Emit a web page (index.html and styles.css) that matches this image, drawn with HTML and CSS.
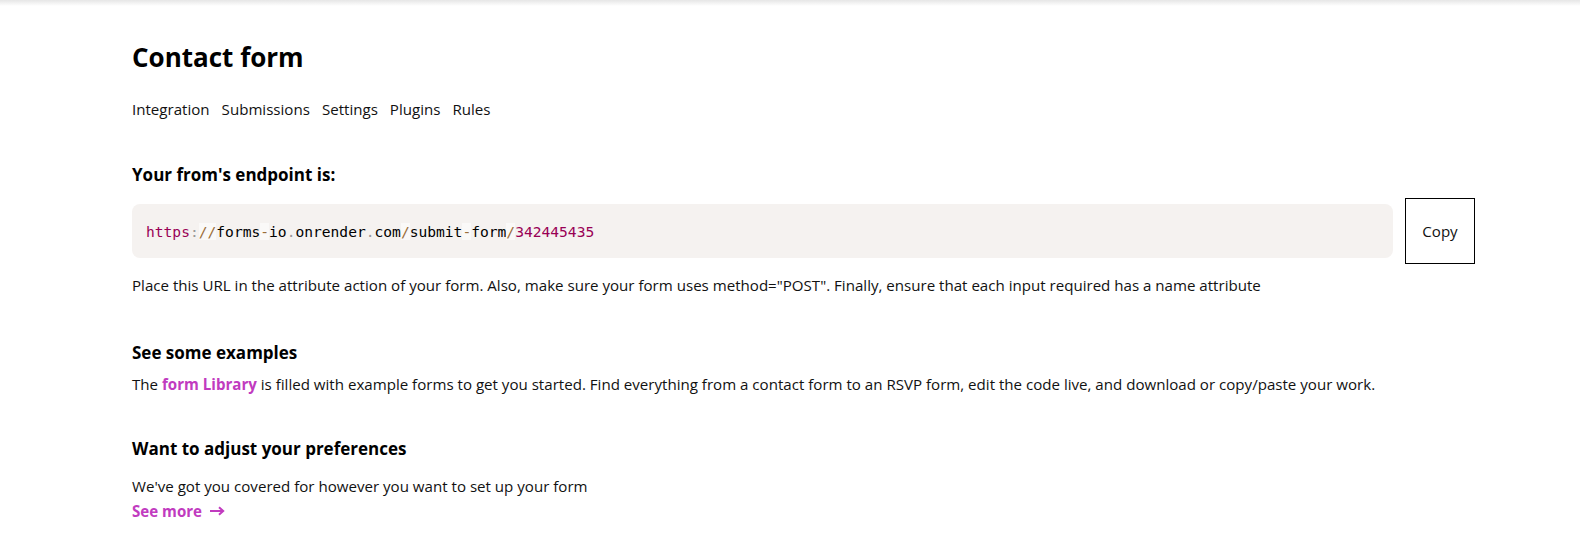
FILE: index.html
```html
<!DOCTYPE html>
<html lang="en">
<head>
<meta charset="utf-8">
<title>Contact form</title>
<link rel="stylesheet" href="styles.css">
</head>
<body>
<div class="topshadow"></div>
<main class="page">
  <h1 class="title">Contact form</h1>
  <nav class="tabs">
    <a href="#">Integration</a>
    <a href="#">Submissions</a>
    <a href="#">Settings</a>
    <a href="#">Plugins</a>
    <a href="#">Rules</a>
  </nav>

  <section class="endpoint">
    <h2 class="h2">Your from's endpoint is:</h2>
    <div class="endpoint-row">
      <pre class="code"><code><span class="kw">https</span><span class="punc">:</span><span class="op">//</span>forms<span class="op">-</span>io<span class="punc">.</span>onrender<span class="punc">.</span>com<span class="op">/</span>submit<span class="op">-</span>form<span class="op">/</span><span class="num">342445435</span></code></pre>
      <button class="copy">Copy</button>
    </div>
    <p class="text">Place this URL in the attribute action of your form. Also, make sure your form uses method="POST". Finally, ensure that each input required has a name attribute</p>
  </section>

  <section class="examples">
    <h2 class="h2">See some examples</h2>
    <p class="text">The <a class="link" href="#">form Library</a> is filled with example forms to get you started. Find everything from a contact form to an RSVP form, edit the code live, and download or copy/paste your work.</p>
  </section>

  <section class="prefs">
    <h2 class="h2">Want to adjust your preferences</h2>
    <p class="text">We've got you covered for however you want to set up your form</p>
    <a class="link more" href="#">See more <svg class="arrow" width="15" height="10" viewBox="0 0 15 10" aria-hidden="true"><path d="M0 5H13M9 1.2L13.2 5L9 8.8" fill="none" stroke="currentColor" stroke-width="2"/></svg></a>
  </section>
</main>
</body>
</html>
```
FILE: styles.css
```css
* { box-sizing: border-box; }
html, body { margin: 0; padding: 0; background: #fff; }
body {
  font-family: "Open Sans", "Noto Sans", sans-serif;
  color: #111;
  font-size: 15.1px;
}
.topshadow {
  height: 6px;
  background: linear-gradient(to bottom, #e6e6e6, rgba(255,255,255,0));
}
.page {
  padding: 0 105px 0 132px;
  display: flex;
  flex-direction: column;
}
.title {
  margin: 33px 0 0;
  font-size: 26px;
  font-weight: 700;
  line-height: 36px;
  color: #000;
}
.tabs {
  display: flex;
  gap: 12px;
  margin-top: 24px;
}
.tabs a { color: #111; text-decoration: none; font-size: 15.1px; line-height: 20px; }
.h2 {
  margin: 0;
  font-size: 17px;
  font-weight: 700;
  line-height: 22px;
  color: #000;
}
.endpoint { margin-top: 45px; }
.endpoint-row {
  display: flex;
  align-items: center;
  gap: 12px;
  margin-top: 12px;
}
.code {
  flex: 1;
  margin: 0;
  background: #f5f2f0;
  border-radius: 8px;
  height: 54px;
  padding: 0 14px;
  display: flex;
  align-items: center;
  font-family: "DejaVu Sans Mono", "Liberation Mono", monospace;
  font-size: 14.6px;
  color: #000;
}
.kw, .num { color: #905; }
.punc { color: #999; }
.op { color: #9a6e3a; background: rgba(255,255,255,0.5); }
.copy {
  width: 70px;
  height: 66px;
  background: #fff;
  border: 1.5px solid #000;
  font-family: inherit;
  font-size: 15.1px;
  color: #111;
  padding: 0;
}
.text { margin: 11px 0 0; line-height: 20px; }
.examples { margin-top: 47px; }
.examples .text { margin-top: 10px; }
.prefs { margin-top: 44px; display: flex; flex-direction: column; align-items: flex-start; }
.prefs .text { margin-top: 16px; }
.link { color: #c13bbf; font-weight: 700; text-decoration: none; }
.more { line-height: 20px; margin-top: 5px; display: inline-flex; align-items: center; }
.arrow { margin-left: 8px; }
```
